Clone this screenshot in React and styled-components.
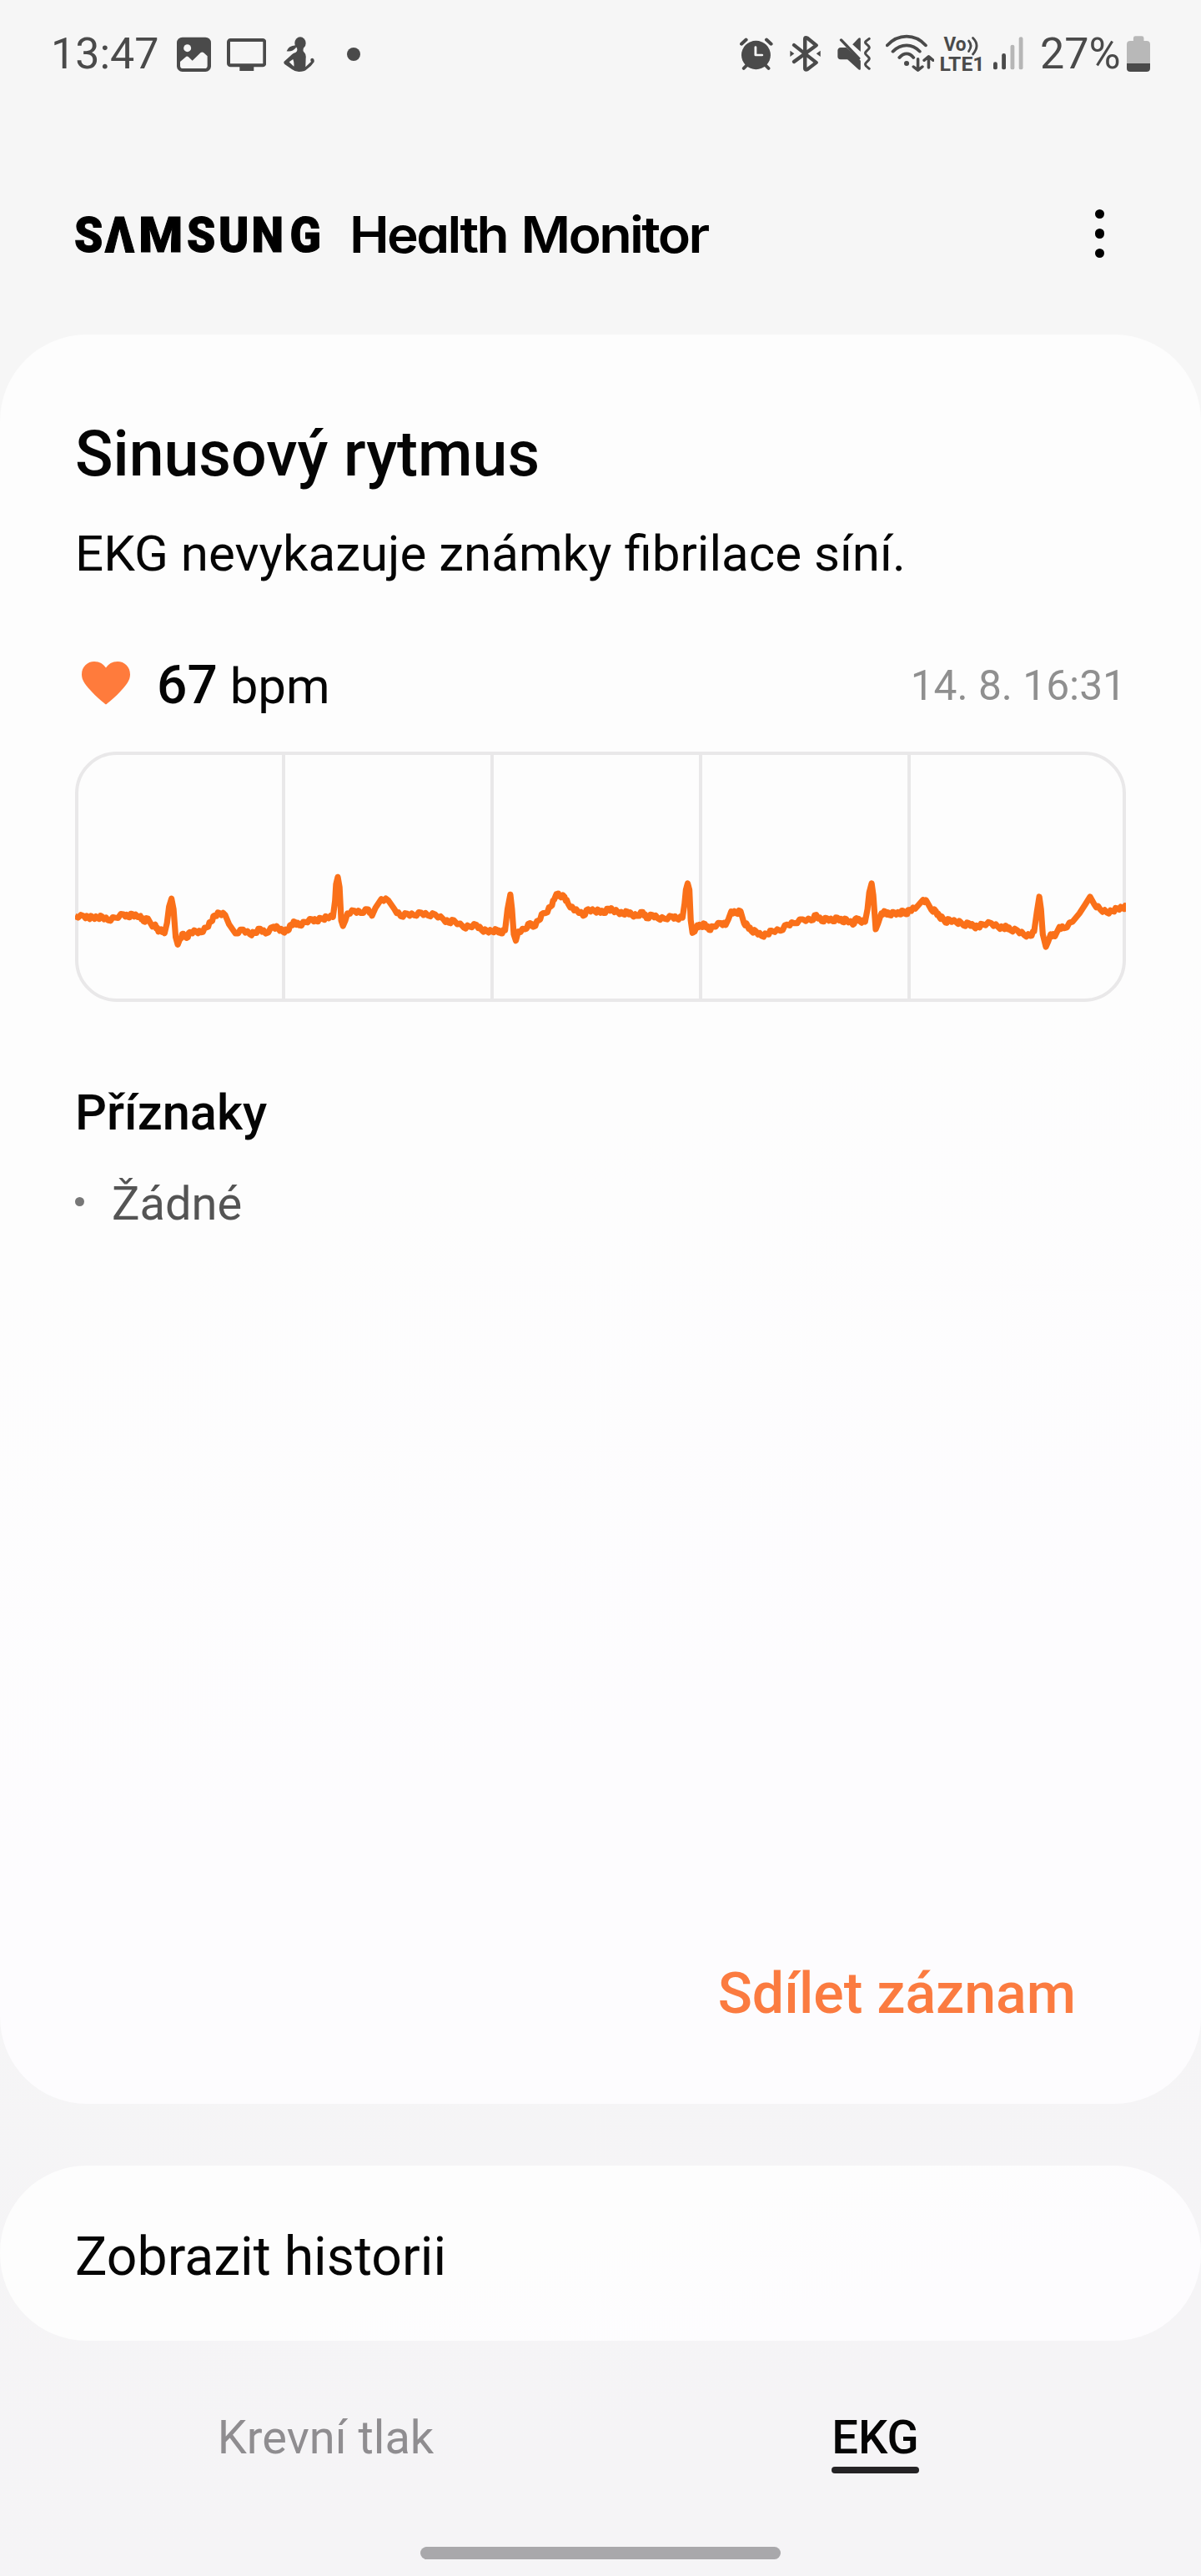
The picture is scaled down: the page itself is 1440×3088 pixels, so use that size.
import React from "react";
import styled, { createGlobalStyle } from "styled-components";

const ink = "#4a4a4a";
const orange = "#fb7b40";

const GlobalStyle = createGlobalStyle`
  *, *::before, *::after { box-sizing: border-box; }
  body {
    margin: 0;
    background: #f6f6f6;
    font-family: Roboto, "Noto Sans", sans-serif;
    color: #050505;
  }
  h1, h2, p, ul { margin: 0; padding: 0; font-weight: 400; }
  button { border: 0; padding: 0; background: none; font: inherit; color: inherit; }
`;

const Screen = styled.div`
  width: 1440px;
  height: 3088px;
  display: flex;
  flex-direction: column;
  background: linear-gradient(165deg, #f6f6f6 45%, #f5f4f6 90%);
`;

const StatusBar = styled.div`
  height: 130px;
  padding: 0 61px 0 61px;
  display: flex;
  align-items: center;
  justify-content: space-between;
  color: ${ink};
`;

const StatusGroup = styled.div`
  display: flex;
  align-items: center;
`;

const StatusText = styled.span`
  width: ${(p) => p.$width}px;
  margin-left: ${(p) => p.$gap || 0}px;
  font-size: 52px;
  line-height: 60px;
  white-space: nowrap;
`;

const Glyph = styled.svg`
  display: block;
  flex: none;
  width: ${(p) => p.$width}px;
  height: ${(p) => p.$height || 48}px;
  margin-left: ${(p) => p.$gap}px;
  fill: ${ink};
`;

const Header = styled.header`
  height: 271px;
  padding: 29px 116px 0 90px;
  display: flex;
  align-items: center;
  justify-content: space-between;
`;

const Wordmark = styled.svg`
  display: block;
  width: 780px;
  height: 80px;
  fill: #000;
`;

const ProductName = styled.text`
  font-family: Inter, sans-serif;
  font-size: 60px;
  font-weight: 600;
  letter-spacing: -2.5px;
  font-feature-settings: "cv11";
`;

const MenuButton = styled.button`
  display: flex;
  flex-direction: column;
  gap: 12px;
`;

const MenuDot = styled.span`
  width: 11.5px;
  height: 11.5px;
  border-radius: 50%;
  background: #000;
`;

const Card = styled.section`
  border-radius: 104px;
  background: linear-gradient(165deg, #fdfdfd 45%, #fdfcfe 75%);
`;

const ResultCard = styled(Card)`
  height: 2121px;
  padding: 99px 90px 92px;
  display: flex;
  flex-direction: column;
`;

const Title = styled.h1`
  font-size: 75.2px;
  font-weight: 500;
  line-height: 88px;
  padding-bottom: 2px;
`;

const Summary = styled.p`
  margin-top: 39px;
  font-size: 60.1px;
  line-height: 70px;
`;

const RateRow = styled.div`
  margin-top: 83px;
  height: 80px;
  display: flex;
  align-items: center;
`;

const HeartIcon = styled.svg`
  display: block;
  width: 58px;
  height: 52px;
  margin: -6px 32px 0 8px;
  fill: #ff7b3c;
`;

const Rate = styled.div`
  font-size: 60px;
  line-height: 80px;
`;

const RateValue = styled.span`
  font-size: 64px;
  font-weight: 500;
`;

const Timestamp = styled.time`
  margin-left: auto;
  font-size: 49.7px;
  line-height: 80px;
  color: #8f8f8f;
`;

const Chart = styled.div`
  position: relative;
  margin-top: 39px;
  height: 300px;
  display: grid;
  grid-template-columns: 248px 250px 250px 250px 1fr;
  border: 4px solid #e9e8e9;
  border-radius: 50px;
`;

const Interval = styled.div`
  border-right: 4px solid #e9e8e9;
  &:last-of-type { border-right: 0; }
`;

const Trace = styled.svg`
  position: absolute;
  left: -4px;
  top: -4px;
  width: 1260px;
  height: 300px;
  fill: none;
  stroke: #fa7019;
  stroke-width: 7.2;
  stroke-linejoin: round;
`;

const SectionTitle = styled.h2`
  margin-top: 98px;
  font-size: 59.6px;
  font-weight: 500;
  line-height: 70px;
`;

const SymptomList = styled.ul`
  margin-top: 39px;
  list-style: none;
`;

const Symptom = styled.li`
  display: flex;
  align-items: center;
  font-size: 56px;
  line-height: 70px;
  color: #545454;

  &::before {
    content: "";
    width: 11px;
    height: 11px;
    margin: -6px 33px 0 0;
    border-radius: 50%;
    background: #777;
  }
`;

const ShareButton = styled.button`
  margin: auto 60px 0 0;
  align-self: flex-end;
  font-size: 68px;
  font-weight: 500;
  line-height: 80px;
  color: ${orange};
`;

const HistoryCard = styled(Card)`
  margin-top: 74px;
  height: 210px;
  padding: 8px 90px 0;
  display: flex;
  align-items: center;
  font-size: 64.3px;
`;

const Tabs = styled.nav`
  padding: 86px 61px 0 61px;
  display: grid;
  grid-template-columns: 1fr 1fr;
  justify-items: center;
`;

const Tab = styled.button`
  font-size: 56px;
  line-height: 60px;
  font-weight: ${(p) => (p.$active ? 500 : 400)};
  color: ${(p) => (p.$active ? "#050505" : "#8f8d90")};

  &::after {
    content: "";
    display: block;
    height: 8px;
    margin-top: 5px;
    border-radius: 4px;
    background: ${(p) => (p.$active ? "#252325" : "transparent")};
  }
`;

const HomeBar = styled.div`
  width: 432px;
  height: 15px;
  margin: auto auto 20px;
  border-radius: 8px;
  background: #a9a8ab;
`;

/* Recording samples: horizontal position in trace steps, vertical position in thirds of a pixel. */
const STEP = 2.4123;
const firstHalf = [
  [24, 625], [50, 625], [62, 631], [75, 628], [90, 632], [102, 626], [120, 640], [140, 630], [165, 618], [178, 628],
  [190, 617], [205, 628], [213, 624], [222, 643], [235, 634], [248, 662], [256, 655], [265, 680], [273, 672], [283, 686],
  [290, 650], [296, 590], [303, 562], [309, 600], [315, 700], [321, 727], [328, 705], [337, 688], [347, 703], [357, 682],
  [375, 680], [388, 683], [405, 665], [417, 645], [428, 622], [442, 614], [458, 620], [470, 655], [488, 687], [510, 673],
  [530, 690], [543, 685], [560, 670], [575, 687], [598, 663], [612, 668], [625, 680], [638, 677], [650, 655], [660, 646],
  [673, 658], [690, 646], [710, 636], [722, 643], [736, 632], [742, 636], [752, 627], [770, 628], [776, 570], [779, 510],
  [784, 484], [789, 520], [794, 640], [799, 660], [806, 640], [812, 615], [832, 605], [850, 613], [872, 600], [883, 623],
  [893, 595], [910, 563], [930, 568], [948, 600], [966, 625], [985, 616], [1005, 622], [1025, 612], [1045, 622],
  [1065, 618], [1090, 637], [1105, 648], [1120, 640], [1148, 665], [1165, 662], [1185, 656], [1200, 675], [1215, 678],
  [1230, 680], [1245, 674], [1255, 686], [1268, 675], [1275, 600], [1283, 547], [1288, 600], [1293, 690], [1299, 713],
  [1306, 680], [1325, 672], [1340, 650], [1350, 663], [1365, 640], [1378, 614], [1385, 614], [1400, 590], [1410, 565],
  [1416, 546], [1425, 550], [1440, 556], [1450, 580], [1468, 604], [1474, 600], [1494, 623], [1508, 600], [1528, 608],
  [1540, 605], [1552, 613],
];
const secondHalf = [
  [24, 598], [35, 603], [50, 610], [65, 617], [78, 609], [90, 620], [106, 624], [122, 610], [133, 632], [150, 620],
  [165, 632], [185, 634], [208, 626], [220, 633], [237, 630], [243, 580], [247, 530], [252, 507], [257, 530], [261, 640],
  [266, 685], [272, 680], [280, 658], [290, 662], [302, 653], [314, 674], [325, 662], [348, 650], [362, 656], [370, 635],
  [378, 608], [392, 614], [405, 607], [415, 650], [425, 658], [436, 678], [450, 680], [466, 696], [482, 690], [495, 677],
  [520, 677], [540, 655], [560, 650], [585, 636], [610, 640], [624, 620], [640, 643], [655, 632], [672, 643], [685, 630],
  [700, 645], [710, 635], [730, 655], [740, 632], [750, 643], [765, 645], [772, 600], [777, 540], [784, 507], [789, 550],
  [796, 672], [803, 650], [812, 615], [825, 610], [835, 620], [850, 612], [865, 618], [875, 605], [884, 618], [893, 602],
  [910, 598], [933, 566], [945, 575], [957, 602], [970, 607], [980, 628], [990, 632], [998, 648], [1008, 636],
  [1030, 648], [1042, 647], [1050, 658], [1065, 650], [1080, 663], [1092, 664], [1105, 654], [1130, 650], [1150, 664],
  [1165, 668], [1175, 662], [1185, 675], [1205, 675], [1225, 692], [1243, 696], [1254, 680], [1262, 610], [1269, 555],
  [1274, 600], [1279, 690], [1288, 735], [1295, 715], [1302, 690], [1314, 697], [1327, 664], [1340, 668], [1365, 645],
  [1385, 615], [1402, 583], [1416, 555], [1428, 582], [1445, 600], [1465, 612], [1480, 607], [1495, 597], [1510, 596],
  [1522, 590],
];

/* Long, nearly level stretches carry a fine ripple from the sensor. */
function withRipple(samples) {
  return samples.flatMap(([x, y], i) => {
    const next = samples[i + 1];
    if (!next || next[0] - x < 9 || Math.abs(next[1] - y) > 26) return [[x, y]];
    const dx = next[0] - x;
    const dy = next[1] - y;
    return [
      [x, y],
      [x + dx * 0.35, y + dy * 0.35 + 5],
      [x + dx * 0.65, y + dy * 0.65 - 5],
    ];
  });
}

const tracePoints = withRipple([...firstHalf, ...secondHalf.map(([x, y]) => [x + 1544, y])])
  .map(([x, y]) => `${(x / STEP - 10).toFixed(1)},${(y / 3 - 11).toFixed(1)}`)
  .join(" ");

function Icon({ box, width, height, gap, children }) {
  return (
    <Glyph $width={width} $height={height} $gap={gap} viewBox={box} preserveAspectRatio="none" aria-hidden="true">
      {children}
    </Glyph>
  );
}

const line = { fill: "none", stroke: ink, strokeLinecap: "round", strokeLinejoin: "round" };

function LeftStatus() {
  return (
    <StatusGroup>
      <StatusText $width={129}>13:47</StatusText>
      <Icon box="516 63 123 144" width={41} gap={22}>
        <rect x="516" y="74" width="123" height="124" rx="20" />
        <circle cx="554" cy="113" r="13.5" fill="#f6f6f6" />
        <path fill="#f6f6f6" d="M528 162L550 143Q554 141 558 145L572 158L602 129Q607 126 612 129L626 142V176Q626 186 616 186H538Q528 186 528 176Z" />
      </Icon>
      <Icon box="695 63 142 144" width={47.3} gap={18.7}>
        <rect x="701" y="84" width="130" height="91" rx="7" {...line} strokeWidth="12" />
        <rect x="741" y="178" width="51" height="17" />
      </Icon>
      <Icon box="901 63 112 144" width={37.3} gap={21.4}>
        <ellipse cx="961" cy="95" rx="20" ry="22" />
        <path d="M945 103Q918 105 912 124Q932 128 946 111Z" />
        <path
          fillRule="evenodd"
          d="M944 129Q954 122 948 112H974Q968 123 976 129Q983 136 981 150L980 181L1000 162Q994 150 1005 149Q1013 150 1011 163Q1000 180 984 190Q976 198 956 198Q942 198 932 190L905 171Q900 166 903 161L932 135Q937 130 944 129ZM921 163L935 153Q940 166 938 179Z"
        />
      </Icon>
      <Icon box="1128 63 48 144" width={16} gap={38.3}>
        <circle cx="1152" cy="135" r="24" />
      </Icon>
    </StatusGroup>
  );
}

function RightStatus() {
  return (
    <StatusGroup>
      <Icon box="77 63 111 144" width={39.6} gap={0}>
        <ellipse cx="131.5" cy="138" rx="49" ry="51.5" />
        <path d="M83 98L98 83M182 98L167 83" {...line} strokeWidth="12" />
        <path d="M99 176L90 186M165 176L174 186" {...line} strokeWidth="11" />
        <path d="M130 110V138H152" {...line} stroke="#f6f6f6" strokeWidth="8" />
      </Icon>
      <Icon box="244 63 104 144" width={37.1} gap={20}>
        <path d="M258 162L333 103L302 76Q295 73 295 80V186Q295 193 302 190L333 165L258 102" {...line} strokeWidth="12.5" />
        <path d="M245 122L259 133L245 144ZM347 122L333 133L347 144Z" />
      </Icon>
      <Icon box="404 63 112 144" width={40} gap={20}>
        <path d="M405 121Q406 112 415 111H434L482 158V188Q480 194 475 190L438 154H415Q405 153 405 144Z" />
        <path d="M482 79V126L455 100L475 77Q480 73 482 79Z" />
        <path d="M417 84L476 150" {...line} strokeWidth="10" />
        <path d="M511 79L500 88Q496 92 500 97L509 106Q513 111 509 116L500 126Q496 131 500 136L509 146Q513 151 509 156L500 166Q496 171 500 177L511 187" {...line} strokeWidth="8.5" />
      </Icon>
      <Icon box="567 63 162 144" width={57.9} gap={18.2}>
        <path d="M572 103Q600 71 637 71Q674 71 701 103M591 125Q611 103 637 103Q662 103 681 125M613 147Q624 133 637 133Q650 133 660 147" {...line} strokeWidth="11" />
        <ellipse cx="637" cy="168" rx="8.5" ry="9" />
        <path d="M675 152V192M660 180L675 193L690 180M711 183V144M696 157L711 143L726 157" {...line} strokeWidth="10" />
      </Icon>
      <Icon box="-3 -6 60 60" width={60} height={60} gap={4.5}>
        <text x="4.5" y="20" fontSize="23" fontWeight="700" textLength="27" lengthAdjust="spacingAndGlyphs">Vo</text>
        <text x="-0.5" y="43.7" fontSize="24" fontWeight="700" textLength="54" lengthAdjust="spacingAndGlyphs">LTE1</text>
        <path d="M34.5 8Q39.5 13.5 34.5 20.5M39.5 4.5Q48.5 13.5 39.5 24" {...line} strokeWidth="2.8" />
      </Icon>
      <Icon box="929 63 100 144" width={35.7} gap={7}>
        <rect x="929" y="163" width="13.5" height="27" rx="6.5" />
        <rect x="957.5" y="132" width="13.5" height="58" rx="6.5" />
        <rect x="986.5" y="101" width="13.5" height="89" rx="6.5" fill="#b6b6b6" />
        <rect x="1015" y="73" width="13.5" height="117" rx="6.5" fill="#b6b6b6" />
      </Icon>
      <StatusText $width={104} $gap={20}>27%</StatusText>
      <Icon box="1375 63 78 144" width={28} gap={0}>
        <path fill="#b8b8b8" d="M1397 87V77Q1397 70 1404 70H1425Q1432 70 1432 77V87H1441Q1453 87 1453 99V170H1375V99Q1375 87 1387 87Z" />
        <path d="M1375 168H1453V186Q1453 198 1441 198H1387Q1375 198 1375 186Z" />
      </Icon>
    </StatusGroup>
  );
}

function Brand() {
  return (
    <Wordmark viewBox="0 0 780 80" role="img" aria-label="SAMSUNG Health Monitor">
      <text
        transform="scale(0.93 1)"
        y="62.5"
        fontFamily="Roboto, sans-serif"
        fontWeight="900"
        fontSize="59"
        stroke="#000"
        strokeWidth="1"
      >
        <tspan x="-1 38.5">SΛ</tspan>
        <tspan x="82" textLength="57" lengthAdjust="spacingAndGlyphs">M</tspan>
        <tspan x="144 185 227.5 277">SUNG</tspan>
      </text>
      <ProductName x="329" y="62.5" textLength="189" lengthAdjust="spacingAndGlyphs">
        Health
      </ProductName>
      <ProductName x="534.5" y="62.5" textLength="224" lengthAdjust="spacingAndGlyphs">
        Monitor
      </ProductName>
    </Wordmark>
  );
}

export default function App() {
  return (
    <>
      <GlobalStyle />
      <Screen>
        <StatusBar>
          <LeftStatus />
          <RightStatus />
        </StatusBar>
        <Header>
          <Brand />
          <MenuButton aria-label="Menu">
            <MenuDot />
            <MenuDot />
            <MenuDot />
          </MenuButton>
        </Header>
        <ResultCard>
          <Title>Sinusový rytmus</Title>
          <Summary>EKG nevykazuje známky fibrilace síní.</Summary>
          <RateRow>
            <HeartIcon viewBox="0 0 58 52" aria-hidden="true">
              <path d="M29 51.5C27 50 17 42 10 34C3.5 27 0 22 0 15.5C0 6 7 0 15 0C21.5 0 26 3 29 7.5C32 3 36.5 0 43 0C51 0 58 6 58 15.5C58 22 54.5 27 48 34C41 42 31 50 29 51.5Z" />
            </HeartIcon>
            <Rate>
              <RateValue>67</RateValue> bpm
            </Rate>
            <Timestamp>14. 8. 16:31</Timestamp>
          </RateRow>
          <Chart>
            <Interval />
            <Interval />
            <Interval />
            <Interval />
            <Interval />
            <Trace viewBox="0 0 1260 300">
              <polyline points={tracePoints} />
            </Trace>
          </Chart>
          <SectionTitle>Příznaky</SectionTitle>
          <SymptomList>
            <Symptom>Žádné</Symptom>
          </SymptomList>
          <ShareButton>Sdílet záznam</ShareButton>
        </ResultCard>
        <HistoryCard>Zobrazit historii</HistoryCard>
        <Tabs>
          <Tab>Krevní tlak</Tab>
          <Tab $active>EKG</Tab>
        </Tabs>
        <HomeBar />
      </Screen>
    </>
  );
}
